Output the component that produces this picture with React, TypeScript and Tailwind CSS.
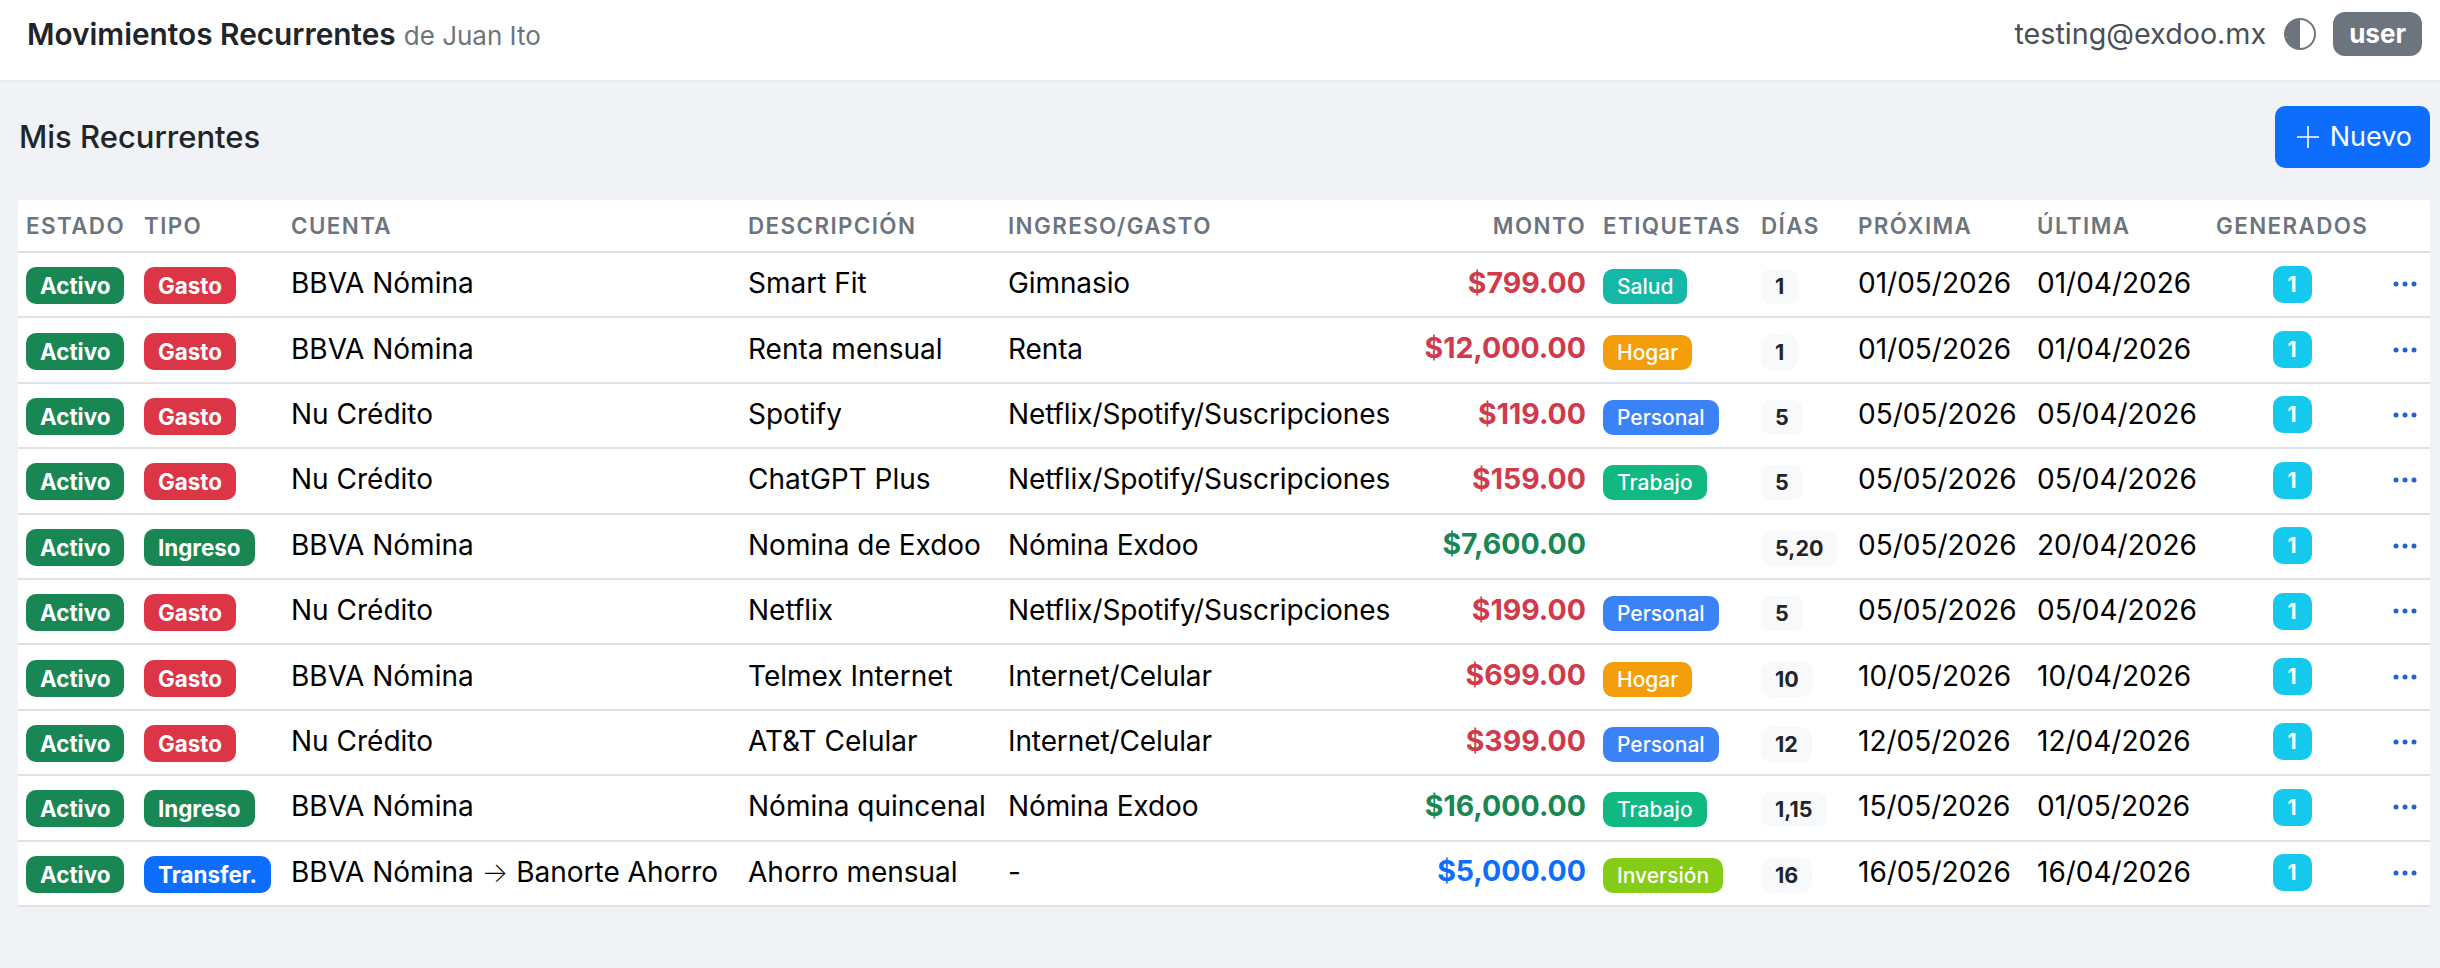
import React from "react";

type Row = {
  tipo: "Gasto" | "Ingreso" | "Transfer.";
  cuenta: string;
  destino?: string;
  descripcion: string;
  categoria: string;
  monto: string;
  etiqueta?: "Salud" | "Hogar" | "Personal" | "Trabajo" | "Inversión";
  dias: string;
  proxima: string;
  ultima: string;
};

const rows: Row[] = [
  { tipo: "Gasto", cuenta: "BBVA Nómina", descripcion: "Smart Fit", categoria: "Gimnasio", monto: "$799.00", etiqueta: "Salud", dias: "1", proxima: "01/05/2026", ultima: "01/04/2026" },
  { tipo: "Gasto", cuenta: "BBVA Nómina", descripcion: "Renta mensual", categoria: "Renta", monto: "$12,000.00", etiqueta: "Hogar", dias: "1", proxima: "01/05/2026", ultima: "01/04/2026" },
  { tipo: "Gasto", cuenta: "Nu Crédito", descripcion: "Spotify", categoria: "Netflix/Spotify/Suscripciones", monto: "$119.00", etiqueta: "Personal", dias: "5", proxima: "05/05/2026", ultima: "05/04/2026" },
  { tipo: "Gasto", cuenta: "Nu Crédito", descripcion: "ChatGPT Plus", categoria: "Netflix/Spotify/Suscripciones", monto: "$159.00", etiqueta: "Trabajo", dias: "5", proxima: "05/05/2026", ultima: "05/04/2026" },
  { tipo: "Ingreso", cuenta: "BBVA Nómina", descripcion: "Nomina de Exdoo", categoria: "Nómina Exdoo", monto: "$7,600.00", dias: "5,20", proxima: "05/05/2026", ultima: "20/04/2026" },
  { tipo: "Gasto", cuenta: "Nu Crédito", descripcion: "Netflix", categoria: "Netflix/Spotify/Suscripciones", monto: "$199.00", etiqueta: "Personal", dias: "5", proxima: "05/05/2026", ultima: "05/04/2026" },
  { tipo: "Gasto", cuenta: "BBVA Nómina", descripcion: "Telmex Internet", categoria: "Internet/Celular", monto: "$699.00", etiqueta: "Hogar", dias: "10", proxima: "10/05/2026", ultima: "10/04/2026" },
  { tipo: "Gasto", cuenta: "Nu Crédito", descripcion: "AT&T Celular", categoria: "Internet/Celular", monto: "$399.00", etiqueta: "Personal", dias: "12", proxima: "12/05/2026", ultima: "12/04/2026" },
  { tipo: "Ingreso", cuenta: "BBVA Nómina", descripcion: "Nómina quincenal", categoria: "Nómina Exdoo", monto: "$16,000.00", etiqueta: "Trabajo", dias: "1,15", proxima: "15/05/2026", ultima: "01/05/2026" },
  { tipo: "Transfer.", cuenta: "BBVA Nómina", destino: "Banorte Ahorro", descripcion: "Ahorro mensual", categoria: "-", monto: "$5,000.00", etiqueta: "Inversión", dias: "16", proxima: "16/05/2026", ultima: "16/04/2026" },
];

const tipoBg = { Gasto: "bg-[#dc3545]", Ingreso: "bg-[#198754]", "Transfer.": "bg-[#0d6efd]" };
const montoColor = { Gasto: "text-[#d03a4a]", Ingreso: "text-[#198754]", "Transfer.": "text-[#0d6efd]" };
const etiquetaBg = {
  Salud: "bg-[#14b8a6]",
  Hogar: "bg-[#f59e0b]",
  Personal: "bg-[#3b82f6]",
  Trabajo: "bg-[#10b981]",
  "Inversión": "bg-[#84cc16]",
};

const thClass = "px-2 text-left align-middle text-[22.4px] font-semibold uppercase tracking-[1.4px] text-[#6c757d]";
const tdClass = "px-2 pb-[3px] align-middle whitespace-nowrap";

function Badge({ className, children }: { className: string; children: React.ReactNode }) {
  return (
    <span className={`inline-block h-[37px] translate-y-px rounded-[10px] px-[14px] text-[22.4px] leading-[37px] font-bold text-white ${className}`}>
      {children}
    </span>
  );
}

function ContrastIcon() {
  return (
    <svg viewBox="0 0 16 16" className="h-8 w-8" fill="#6c757d">
      <path d="M8 1a7 7 0 1 0 0 14zm0-1a8 8 0 1 1 0 16A8 8 0 0 1 8 0m0 1a7 7 0 1 1 0 14 7 7 0 0 1 0-14" fillRule="evenodd" />
    </svg>
  );
}

function Dots() {
  return (
    <svg viewBox="0 0 24 6" className="h-[6px] w-6" fill="#1f63d6">
      <circle cx="3" cy="3" r="2.5" />
      <circle cx="12" cy="3" r="2.5" />
      <circle cx="21" cy="3" r="2.5" />
    </svg>
  );
}

export default function App() {
  return (
    <div className="min-h-[968px] bg-[#f0f2f5] font-['Inter',sans-serif] text-[28px] text-black">
      <header className="flex h-[82px] items-center justify-between border-b-2 border-[#e9ecef] bg-white pr-[18px] pb-[12px] pl-[27px]">
        <div className="flex items-baseline gap-2">
          <span className="text-[29.8px] font-semibold text-[#212529]">Movimientos Recurrentes</span>
          <span className="text-[26px] text-[#6c757d]">de Juan Ito</span>
        </div>
        <div className="flex items-center">
          <span className="text-[28.7px] text-[#495057]">testing@exdoo.mx</span>
          <span className="mr-[17px] ml-[18px]">
            <ContrastIcon />
          </span>
          <span className="h-[44px] rounded-[12px] bg-[#6c757d] px-[16px] text-[26px] leading-[44px] font-bold text-white">user</span>
        </div>
      </header>

      <main className="pt-6 pr-[10px] pl-[18px]">
        <div className="mb-8 flex h-[62px] items-center justify-between">
          <h1 className="pl-px text-[31px] font-medium text-[#212529]">Mis Recurrentes</h1>
          <button className="flex h-[62px] items-center gap-[11px] rounded-[10px] bg-[#0d6efd] pr-[18px] pl-[22px] text-[27px] text-white">
            <svg viewBox="0 0 22 22" className="h-[22px] w-[22px]" fill="none" stroke="white" strokeWidth="1.6">
              <path d="M11 0v22M0 11h22" />
            </svg>
            Nuevo
          </button>
        </div>

        <table className="w-[2412px] table-fixed border-collapse bg-white">
          <colgroup>
            <col className="w-[118px]" />
            <col className="w-[147px]" />
            <col className="w-[457px]" />
            <col className="w-[260px]" />
            <col className="w-[398px]" />
            <col className="w-[197px]" />
            <col className="w-[158px]" />
            <col className="w-[97px]" />
            <col className="w-[179px]" />
            <col className="w-[179px]" />
            <col className="w-[168px]" />
            <col className="w-[54px]" />
          </colgroup>
          <thead>
            <tr className="h-[52px] border-b-2 border-[#dee2e6]">
              <th className={thClass}>Estado</th>
              <th className={thClass}>Tipo</th>
              <th className={thClass}>Cuenta</th>
              <th className={thClass}>Descripción</th>
              <th className={thClass}>Ingreso/Gasto</th>
              <th className={`${thClass} !pr-[9px] !text-right`}>Monto</th>
              <th className={thClass}>Etiquetas</th>
              <th className={thClass}>Días</th>
              <th className={thClass}>Próxima</th>
              <th className={thClass}>Última</th>
              <th className={thClass}>Generados</th>
              <th />
            </tr>
          </thead>
          <tbody>
            {rows.map((r) => (
              <tr key={r.descripcion} className="h-[65.4px] border-b-2 border-[#dee2e6]">
                <td className={tdClass}>
                  <Badge className="bg-[#198754]">Activo</Badge>
                </td>
                <td className={tdClass}>
                  <Badge className={tipoBg[r.tipo]}>{r.tipo}</Badge>
                </td>
                <td className={tdClass}>
                  {r.cuenta}
                  {r.destino && (
                    <>
                      {" "}
                      <span className="font-extralight">→</span> {r.destino}
                    </>
                  )}
                </td>
                <td className={tdClass}>{r.descripcion}</td>
                <td className={`${tdClass} tracking-[-0.1px]`}>{r.categoria}</td>
                <td className={`${tdClass} !pr-[9px] text-right text-[28.5px] font-bold ${montoColor[r.tipo]}`}>{r.monto}</td>
                <td className={tdClass}>
                  {r.etiqueta && (
                    <span className={`inline-block h-[35px] translate-y-px rounded-[10px] px-[14px] text-[21px] leading-[35px] font-medium text-white ${etiquetaBg[r.etiqueta]}`}>
                      {r.etiqueta}
                    </span>
                  )}
                </td>
                <td className={tdClass}>
                  <span className="inline-block h-[35px] translate-y-px rounded-[10px] bg-[#f8f9fa] px-[14px] text-[21.5px] leading-[35px] font-bold text-[#212529]">
                    {r.dias}
                  </span>
                </td>
                <td className={tdClass}>{r.proxima}</td>
                <td className={tdClass}>{r.ultima}</td>
                <td className={tdClass}>
                  <span className="mx-auto block h-[37px] w-[39px] translate-y-px rounded-[10px] bg-[#14c8ee] text-center text-[21px] leading-[37px] font-bold text-white">1</span>
                </td>
                <td className="pb-px pl-[4px] align-middle">
                  <span className="flex justify-center">
                    <Dots />
                  </span>
                </td>
              </tr>
            ))}
          </tbody>
        </table>
      </main>
    </div>
  );
}
